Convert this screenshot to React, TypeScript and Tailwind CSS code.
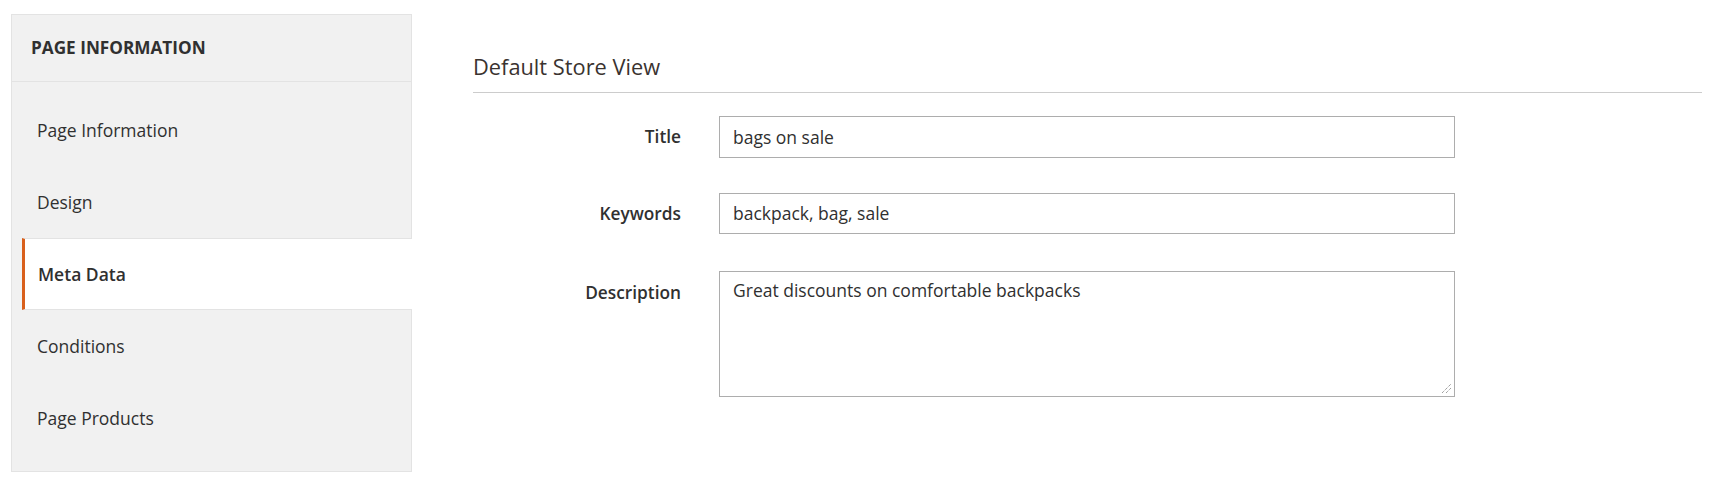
import React from "react";

const font = { fontFamily: '"Open Sans", "Noto Sans", sans-serif' };

function NavItem({ label, active }: { label: string; active?: boolean }) {
  if (active) {
    return (
      <div className="ml-[10px] -mr-px flex h-[72px] items-center border-y border-[#e3e3e3] border-l-[3px] border-l-[#d9601c] bg-white pl-[13px] text-[17.5px] font-semibold text-[#303030]">
        {label}
      </div>
    );
  }
  return (
    <div className="flex h-[72px] items-center pl-[25px] text-[17.5px] text-[#303030]">
      {label}
    </div>
  );
}

function Row({ label, children, top }: { label: string; children: React.ReactNode; top?: boolean }) {
  return (
    <div className={`flex ${top ? "items-start" : "items-center"}`}>
      <div className={`w-[246px] pr-[38px] text-right text-[17.3px] font-semibold text-[#303030] ${top ? "pt-[9px]" : ""}`}>
        {label}
      </div>
      {children}
    </div>
  );
}

export default function App() {
  return (
    <div className="flex h-[486px] w-[1715px] bg-white pl-[11px] pr-[13px] pt-[14px]" style={font}>
      <div className="flex h-[458px] w-[401px] shrink-0 flex-col border border-[#e3e3e3] bg-[#f1f1f1]">
        <div className="flex h-[67px] items-center border-b border-[#e3e3e3] pl-[19px] text-[17.2px] font-bold uppercase text-[#303030]">
          Page Information
        </div>
        <div className="pt-[12px]">
          <NavItem label="Page Information" />
          <NavItem label="Design" />
          <NavItem label="Meta Data" active />
          <NavItem label="Conditions" />
          <NavItem label="Page Products" />
        </div>
      </div>
      <div className="ml-[61px] flex-1">
        <div className="border-b border-[#cccccc] pt-[39px] pb-[11px] text-[21.8px] leading-[28px] text-[#3a3330]">
          Default Store View
        </div>
        <div className="flex flex-col pt-[23px]">
          <Row label="Title">
            <div className="flex h-[42px] w-[736px] items-center border border-[#adadad] px-[13px] text-[17.5px] text-[#303030]">
              bags on sale
            </div>
          </Row>
          <div className="h-[35px]" />
          <Row label="Keywords">
            <div className="flex h-[41px] w-[736px] items-center border border-[#adadad] px-[13px] text-[17.5px] text-[#303030]">
              backpack, bag, sale
            </div>
          </Row>
          <div className="h-[37px]" />
          <Row label="Description" top>
            <div className="relative h-[126px] w-[736px] border border-[#adadad] px-[13px] pt-[5px] text-[17.5px] text-[#303030]">
              Great discounts on comfortable backpacks
              <svg className="absolute bottom-[2px] right-[2px]" width="11" height="11" viewBox="0 0 11 11">
                <line x1="1" y1="10" x2="10" y2="1" stroke="#777" strokeWidth="1" strokeDasharray="1 1" />
                <line x1="5" y1="10" x2="10" y2="5" stroke="#777" strokeWidth="1" strokeDasharray="1 1" />
              </svg>
            </div>
          </Row>
        </div>
      </div>
    </div>
  );
}
